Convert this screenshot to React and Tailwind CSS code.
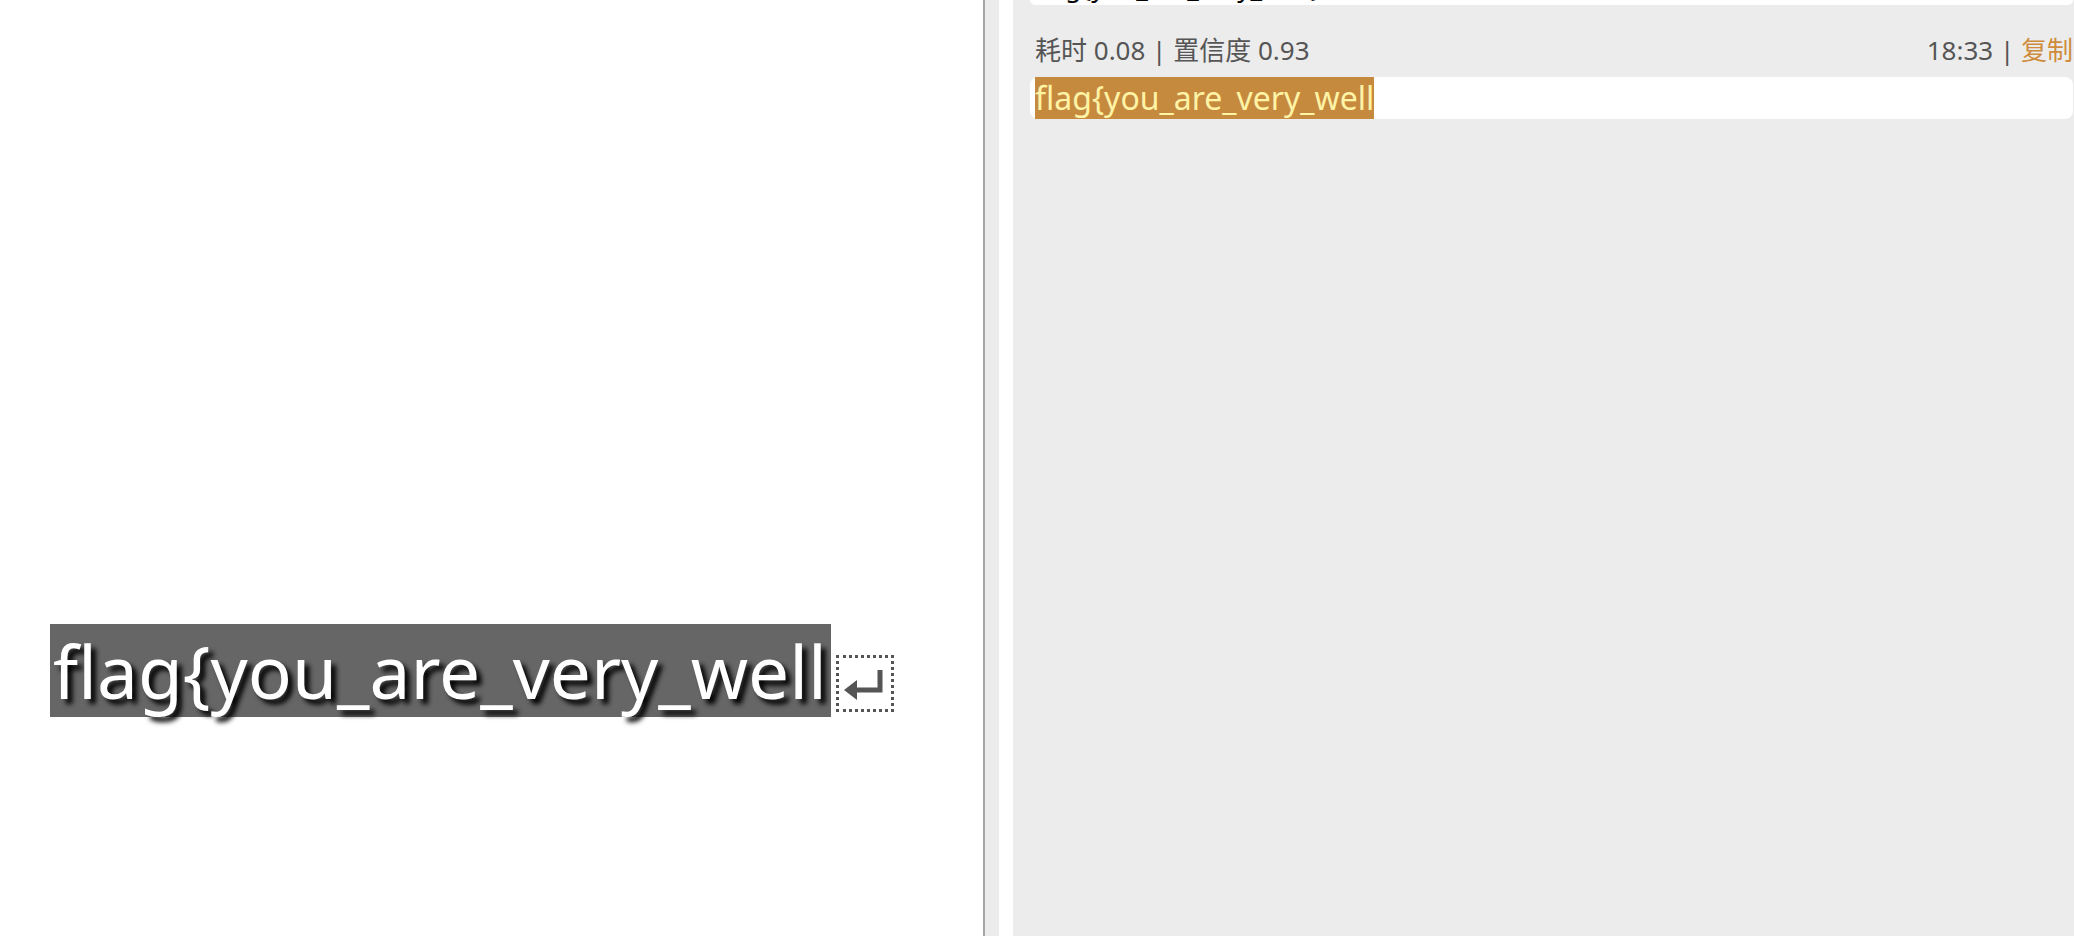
import React from "react";

const FONT = { fontFamily: '"Noto Sans", "Noto Sans CJK SC", sans-serif' };

const ReturnMark = () => (
  <div className="ml-[5px] mt-[31px] flex h-[57px] w-[58px] items-center justify-center border-[3px] border-dotted border-[#555555]">
    <svg width="46" height="36" viewBox="0 0 46 36">
      <path d="M38 4 V24 H12" fill="none" stroke="#555" strokeWidth="5" />
      <path d="M2 24 L15 14 L15 34 Z" fill="#555" />
    </svg>
  </div>
);

const App = () => {
  return (
    <div className="flex h-[936px] w-[2074px] overflow-hidden bg-white" style={FONT}>
      {/* source image side */}
      <div className="w-[983px] shrink-0 bg-white pl-[50px] pt-[624px]">
        <div className="flex items-start">
          <div className="flex h-[93px] w-[781px] items-center bg-[#666666] pl-[3px]">
            <span className="whitespace-nowrap text-[73px] leading-none text-white [text-shadow:5px_5px_5px_#000]">
              flag{"{"}you_are_very_well
            </span>
          </div>
          <ReturnMark />
        </div>
      </div>

      <div className="w-[2px] shrink-0 bg-[#a6a6a6]" />
      <div className="w-[14px] shrink-0 bg-[#ececec]" />
      <div className="w-[14px] shrink-0 bg-white" />

      {/* OCR results */}
      <div className="flex-1 bg-[#ececec] pl-[17px] pr-[1px]">
        <div className="h-[5px] overflow-hidden rounded-b-[8px] bg-white">
          <div className="-mt-[30px] pl-[5px] text-[26px] leading-[34px] text-black">
            flag{"{"}you_are_very_well{"}"}
          </div>
        </div>

        <div className="mt-[30px] flex h-[30px] items-center justify-between text-[26px] text-[#555555]">
          <span className="pl-[5px]">耗时 0.08 | 置信度 0.93</span>
          <span>
            18:33 | <span className="text-[#cf8c3c]">复制</span>
          </span>
        </div>

        <div className="mt-[12px] flex h-[42px] items-center rounded-[8px] bg-white pl-[5px]">
          <span className="flex h-[42px] items-center bg-[#c68a3f] text-[32px] text-[#fff3a6]">
            flag{"{"}you_are_very_well
          </span>
        </div>
      </div>
    </div>
  );
};

export default App;
